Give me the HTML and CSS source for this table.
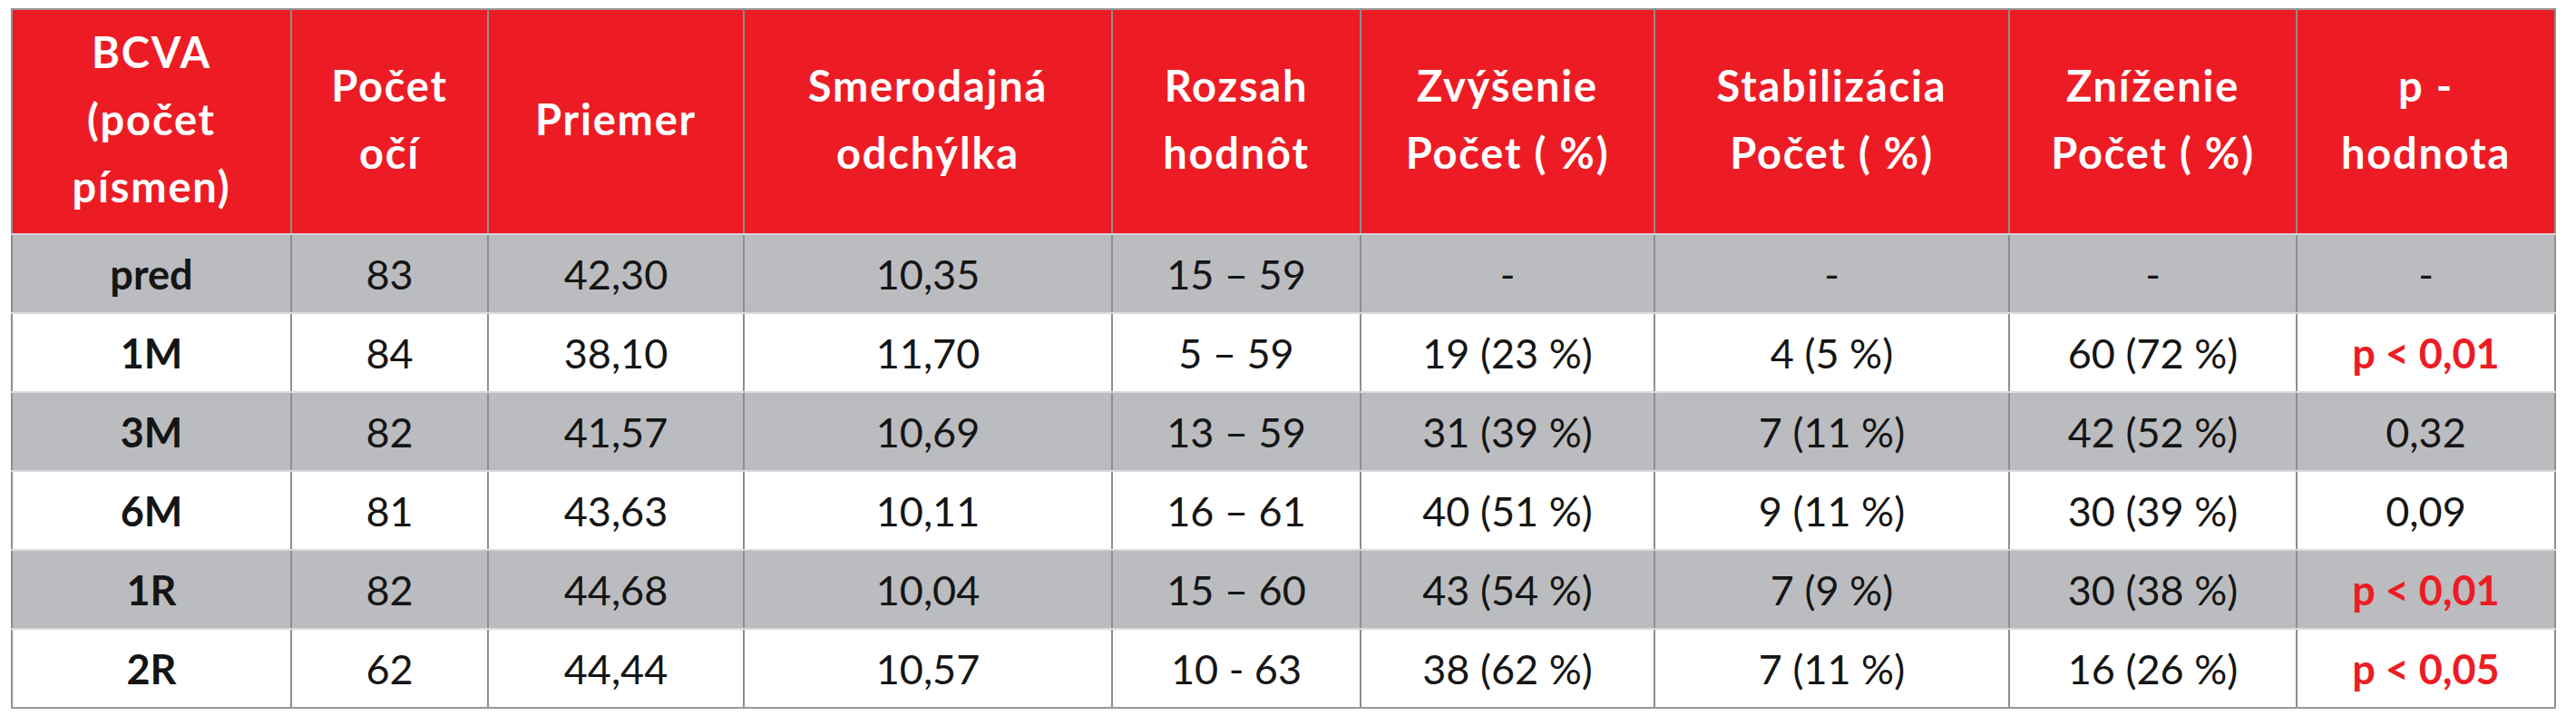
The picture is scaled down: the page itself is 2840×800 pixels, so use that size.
FILE: index.html
```html
<!DOCTYPE html>
<html lang="sk">
<head>
<meta charset="utf-8">
<title>BCVA</title>
<link rel="stylesheet" href="styles.css">
</head>
<body>
<div class="wrap">
<table class="data">
<colgroup>
<col class="c1"><col class="c2"><col class="c3"><col class="c4"><col class="c5"><col class="c6"><col class="c7"><col class="c8"><col class="c9">
</colgroup>
<thead>
<tr>
<th>BCVA<br>(počet<br>písmen)</th>
<th>Počet<br>očí</th>
<th>Priemer</th>
<th>Smerodajná<br>odchýlka</th>
<th>Rozsah<br>hodnôt</th>
<th>Zvýšenie<br>Počet ( %)</th>
<th>Stabilizácia<br>Počet ( %)</th>
<th>Zníženie<br>Počet ( %)</th>
<th>p -<br>hodnota</th>
</tr>
</thead>
<tbody>
<tr class="gray"><td class="lbl">pred</td><td>83</td><td>42,30</td><td>10,35</td><td>15 – 59</td><td>-</td><td>-</td><td>-</td><td>-</td></tr>
<tr class="white"><td class="lbl">1M</td><td>84</td><td>38,10</td><td>11,70</td><td>5 – 59</td><td>19 (23 %)</td><td>4 (5 %)</td><td>60 (72 %)</td><td class="sig">p &lt; 0,01</td></tr>
<tr class="gray"><td class="lbl">3M</td><td>82</td><td>41,57</td><td>10,69</td><td>13 – 59</td><td>31 (39 %)</td><td>7 (11 %)</td><td>42 (52 %)</td><td>0,32</td></tr>
<tr class="white"><td class="lbl">6M</td><td>81</td><td>43,63</td><td>10,11</td><td>16 – 61</td><td>40 (51 %)</td><td>9 (11 %)</td><td>30 (39 %)</td><td>0,09</td></tr>
<tr class="gray"><td class="lbl">1R</td><td>82</td><td>44,68</td><td>10,04</td><td>15 – 60</td><td>43 (54 %)</td><td>7 (9 %)</td><td>30 (38 %)</td><td class="sig">p &lt; 0,01</td></tr>
<tr class="white"><td class="lbl">2R</td><td>62</td><td>44,44</td><td>10,57</td><td>10 - 63</td><td>38 (62 %)</td><td>7 (11 %)</td><td>16 (26 %)</td><td class="sig">p &lt; 0,05</td></tr>
</tbody>
</table>
</div>
</body>
</html>
```

FILE: styles.css
```css
html, body {
  margin: 0;
  padding: 0;
  background: #ffffff;
}

.wrap {
  padding: 9px 0 0 12px;
}

.data {
  border-collapse: collapse;
  table-layout: fixed;
  width: 2805px;
  font-family: Lato, "Liberation Sans", sans-serif;
  color: #151515;
  border: 2px solid #9a9a9a;
}

.c1 { width: 308px; }
.c2 { width: 217px; }
.c3 { width: 282px; }
.c4 { width: 406px; }
.c5 { width: 274px; }
.c6 { width: 324px; }
.c7 { width: 391px; }
.c8 { width: 317px; }
.c9 { width: 285px; }

.data th {
  background: #ed1c24;
  color: #ffffff;
  font-weight: 700;
  font-size: 47px;
  line-height: 74px;
  height: 240px;
  padding: 0 0 6px;
  text-align: center;
  vertical-align: middle;
  border-left: 2px solid #8e8e8e;
  border-right: 2px solid #8e8e8e;
  border-bottom: 2px solid #d4d4d6;
  letter-spacing: 1.8px;
}

.data td {
  font-size: 45px;
  font-weight: 400;
  height: 85px;
  padding: 0;
  text-align: center;
  vertical-align: middle;
  border-left: 2px solid #8e8e8e;
  border-right: 2px solid #8e8e8e;
  border-top: 2px solid #dadadc;
  border-bottom: 2px solid #dadadc;
}

.gray td {
  background: #bbbcbf;
}

.white td {
  background: #ffffff;
}

.data td.lbl {
  font-weight: 700;
}

.data td.sig {
  color: #ed1c24;
  font-weight: 700;
}

.data tbody tr:last-child td {
  border-bottom: 2px solid #9a9a9a;
}
```
